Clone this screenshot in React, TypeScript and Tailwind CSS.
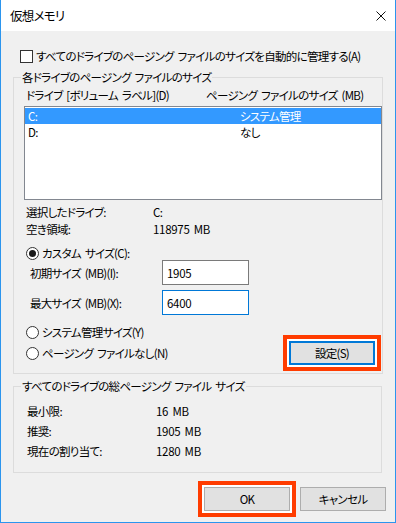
import React from "react";

function Radio({ checked }: { checked?: boolean }) {
  return (
    <span className="inline-flex h-[13px] w-[13px] shrink-0 items-center justify-center rounded-full border border-[#333] bg-white">
      {checked && <span className="h-[7px] w-[7px] rounded-full bg-[#1a1a1a]" />}
    </span>
  );
}

function Marked({ children }: { children: React.ReactNode }) {
  return <div className="border-4 border-[#ff3c00] bg-white p-[2px]">{children}</div>;
}

const totals = [
  { label: "最小限:", value: "16 MB" },
  { label: "推奨:", value: "1905 MB" },
  { label: "現在の割り当て:", value: "1280 MB" },
];

export default function App() {
  return (
    <div className="flex h-[523px] w-[396px] flex-col border-x border-b border-[#2b95ee] bg-[#f0f0f0] font-['Noto_Sans_CJK_JP','Noto_Sans',sans-serif] text-[11.5px] leading-[16px] tracking-[-0.7px] whitespace-nowrap text-black [font-feature-settings:'palt'] [word-spacing:2px]">
      <header className="flex h-[31px] shrink-0 items-center justify-between bg-white pl-[9px] pr-[9px]">
        <span className="text-[12.5px]">仮想メモリ</span>
        <svg className="h-[10px] w-[10px]" viewBox="0 0 10 10">
          <path d="M0.5 0.5 L9.5 9.5 M9.5 0.5 L0.5 9.5" stroke="#111" strokeWidth="1" />
        </svg>
      </header>

      <div className="flex flex-1 flex-col px-[12px]">
        <label className="mt-[17px] flex h-[16px] items-center gap-[3px] pl-[7px]">
          <span className="h-[13px] w-[13px] shrink-0 border border-[#333] bg-white" />
          <span>すべてのドライブのページング ファイルのサイズを自動的に管理する(A)</span>
        </label>

        <fieldset className="mt-[5px] w-[369px] border border-[#dcdcdc] pb-[2px]">
          <legend className="ml-[7px] px-[1px]">各ドライブのページング ファイルのサイズ</legend>
          <div className="mt-[2px] flex h-[16px] pl-[12px]">
            <span className="w-[180px]">ドライブ [ボリューム ラベル](D)</span>
            <span>ページング ファイルのサイズ (MB)</span>
          </div>

          <div className="mt-[3px] ml-[10px] h-[94px] w-[358px] border border-[#828790] bg-white pt-[1px]">
            <div className="flex h-[16px] bg-[#3399ff] pl-[3px] text-white">
              <span className="w-[212px]">C:</span>
              <span>システム管理</span>
            </div>
            <div className="flex h-[16px] pl-[3px]">
              <span className="w-[212px]">D:</span>
              <span>なし</span>
            </div>
          </div>

          <div className="mt-[3px] flex h-[17px] items-center pl-[12px]">
            <span className="w-[127px]">選択したドライブ:</span>
            <span>C:</span>
          </div>
          <div className="flex h-[17px] items-center pl-[12px]">
            <span className="w-[127px]">空き領域:</span>
            <span className="tracking-[-0.3px]">118975 MB</span>
          </div>

          <label className="mt-[9px] flex h-[14px] items-center gap-[3px] pl-[12px]">
            <Radio checked />
            <span>カスタム サイズ(C):</span>
          </label>
          <div className="flex h-[25px] items-center pl-[16px]">
            <span className="w-[132px]">初期サイズ (MB)(I):</span>
            <div className="flex h-[25px] w-[87px] items-center border border-[#7a7a7a] bg-white pl-[4px] tracking-[-0.3px]">1905</div>
          </div>
          <div className="mt-[5px] flex h-[25px] items-center pl-[16px]">
            <span className="w-[132px]">最大サイズ (MB)(X):</span>
            <div className="flex h-[25px] w-[87px] items-center border border-[#0078d7] bg-white pl-[4px] tracking-[-0.3px]">6400</div>
          </div>

          <div className="flex items-start justify-between pr-[1px]">
            <div className="mt-[9px] flex flex-col gap-[5px] pl-[12px]">
              <label className="flex h-[16px] items-center gap-[3px]">
                <Radio />
                <span>システム管理サイズ(Y)</span>
              </label>
              <label className="flex h-[16px] items-center gap-[3px]">
                <Radio />
                <span>ページング ファイルなし(N)</span>
              </label>
            </div>
            <div className="mt-[20px]">
              <Marked>
                <button className="flex h-[24px] w-[86px] items-center justify-center border-2 border-[#0078d7] bg-[#e1e1e1] tracking-[-0.7px]">
                  設定(S)
                </button>
              </Marked>
            </div>
          </div>
        </fieldset>

        <fieldset className="mt-[4px] w-[369px] border border-[#dcdcdc] pb-[11px] pt-[7px]">
          <legend className="ml-[7px] px-[1px]">すべてのドライブの総ページング ファイル サイズ</legend>
          {totals.map((row) => (
            <div className="flex h-[20px] items-center pl-[13px]" key={row.label}>
              <span className="w-[129px]">{row.label}</span>
              <span className="tracking-[-0.3px]">{row.value}</span>
            </div>
          ))}
        </fieldset>

        <div className="mr-[-3px] mt-[8px] flex items-center justify-end gap-[4px]">
          <Marked>
            <button className="flex h-[24px] w-[86px] items-center justify-center border border-[#adadad] bg-[#e1e1e1]">
              OK
            </button>
          </Marked>
          <button className="flex h-[24px] w-[86px] items-center justify-center border border-[#adadad] bg-[#e1e1e1] tracking-[-0.7px]">
            キャンセル
          </button>
        </div>
      </div>
    </div>
  );
}
